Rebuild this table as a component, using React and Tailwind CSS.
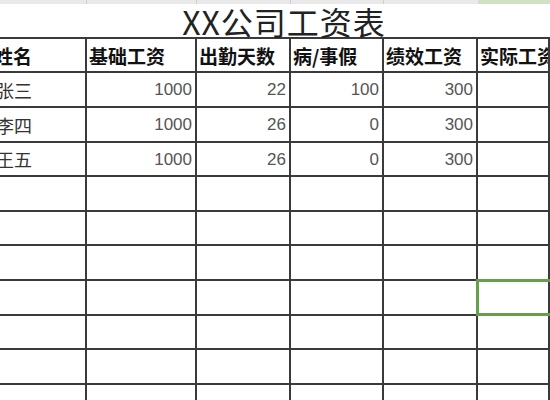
const cols = [
  "w-[87px]",
  "w-[110px]",
  "w-[94px]",
  "w-[93px]",
  "w-[94px]",
  "flex-1",
];

const headers = ["姓名", "基础工资", "出勤天数", "病/事假", "绩效工资", "实际工资"];

const rows = [
  { h: "h-[35px]", cells: ["张三", "1000", "22", "100", "300", ""] },
  { h: "h-[35px]", cells: ["李四", "1000", "26", "0", "300", ""] },
  { h: "h-[34px]", cells: ["王五", "1000", "26", "0", "300", ""] },
  { h: "h-[35px]", cells: ["", "", "", "", "", ""] },
  { h: "h-[34px]", cells: ["", "", "", "", "", ""] },
  { h: "h-[35px]", cells: ["", "", "", "", "", ""] },
  { h: "h-[35px]", cells: ["", "", "", "", "", ""], selected: true },
  { h: "h-[34px]", cells: ["", "", "", "", "", ""] },
  { h: "h-[35px]", cells: ["", "", "", "", "", ""] },
  { h: "h-[35px]", cells: ["", "", "", "", "", ""] },
];

export default function App() {
  return (
    <div className="w-[550px] h-[400px] overflow-hidden bg-white font-['Noto_Sans_CJK_SC',sans-serif]">
      {/* column header strip of the sheet */}
      <div className="flex h-[4px] bg-[#e9e9e9]">
        <div className="w-[87px] border-r border-[#cfcfcf]" />
        <div className="w-[110px] border-r border-[#cfcfcf]" />
        <div className="w-[94px] border-r border-[#cfcfcf]" />
        <div className="w-[93px] border-r border-[#cfcfcf]" />
        <div className="w-[94px]" />
        <div className="flex-1 bg-[#cfe3c2]" />
      </div>

      {/* title */}
      <div className="h-[33px] pl-[18px] text-center">
        <span className="text-[32px] leading-[35px] text-[#222] tracking-[1px]">XX公司工资表</span>
      </div>

      {/* table */}
      <div className="border-t-2 border-[#3a3a3a]">
        <div className="flex h-[34px]">
          {headers.map((t, i) => (
            <div
              key={i}
              className={`${cols[i]} shrink-0 border-r-2 border-b-2 border-[#3a3a3a] flex items-center overflow-hidden whitespace-nowrap ${
                i === 0 ? "" : "pl-[2px]"
              }`}
            >
              <span className={`text-[19px] font-bold text-[#111] leading-none ${i === 0 ? "-ml-[6px]" : ""}`}>{t}</span>
            </div>
          ))}
        </div>

        {rows.map((r, ri) => (
          <div key={ri} className={`flex ${r.h}`}>
            {r.cells.map((c, i) => (
              <div
                key={i}
                className={`${cols[i]} shrink-0 relative border-r-2 border-b-2 border-[#3a3a3a] flex items-center whitespace-nowrap ${
                  i === 0 ? "overflow-hidden" : "justify-end pr-[3px]"
                }`}
              >
                {i === 0 ? (
                  <span className="text-[18px] text-[#333] leading-none -ml-[4px]">{c}</span>
                ) : (
                  <span className="text-[17px] text-[#555] leading-none font-['Liberation_Sans',sans-serif]">{c}</span>
                )}
                {r.selected && i === 5 && (
                  <div className="absolute -top-[2px] -left-[2px] -right-[8px] -bottom-[2px] border-[3px] border-[#64a049]" />
                )}
              </div>
            ))}
          </div>
        ))}
      </div>
    </div>
  );
}
